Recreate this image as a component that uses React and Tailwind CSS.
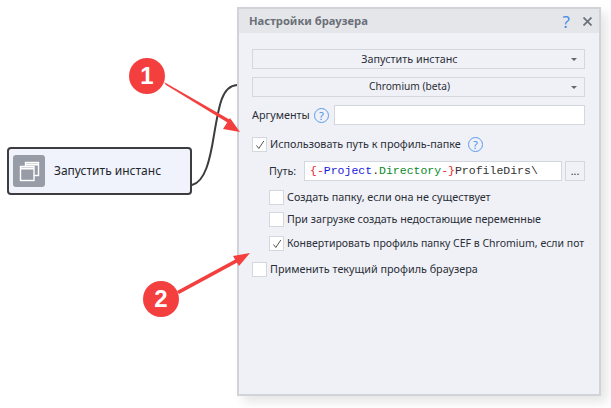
import React from "react";

const font = { fontFamily: '"Noto Sans", "Open Sans", sans-serif' };

const Select = ({ label, size }) => (
  <div className="relative flex h-[20px] items-center justify-center border border-[#d3d7de] bg-[#f0f1f6] pr-[18px] text-[#2a2e36]">
    <span className={size}>{label}</span>
    <span className="absolute right-[7px] top-[8px] h-0 w-0 border-x-[3px] border-t-[3px] border-x-transparent border-t-[#666]" />
  </div>
);

const Help = () => (
  <span className="flex h-[15px] w-[15px] shrink-0 items-center justify-center rounded-full border border-[#5b9bf0] text-[11px] leading-none text-[#4a8de8]">
    ?
  </span>
);

const Check = ({ checked, label, help, size }) => (
  <div className="flex h-[15px] items-center">
    <span className="flex h-[15px] w-[15px] shrink-0 items-center justify-center border border-[#d3d7de] bg-white">
      {checked && (
        <svg width="10" height="10" viewBox="0 0 10 10" fill="none" stroke="#555" strokeWidth="1">
          <path d="M1.5 5.5 L3.8 8.5 L8.8 1" />
        </svg>
      )}
    </span>
    <span className={`ml-[3px] whitespace-nowrap text-[#2a2e36] ${size || ""}`}>{label}</span>
    {help && (
      <span className="ml-[7px]">
        <Help />
      </span>
    )}
  </div>
);

const Arrow = ({ d, pts }) => (
  <>
    <path d={d} fill="#f43f3f" />
    <polygon points={pts} fill="#f43f3f" />
  </>
);

export default function App() {
  return (
    <div className="relative h-[408px] w-[611px] overflow-hidden bg-white text-[10.8px]" style={font}>
      {/* node on the canvas */}
      <div className="absolute left-[7px] top-[147px] flex h-[48px] w-[185px] items-center rounded-[4px] border-2 border-[#3d3d40] bg-[#f0f3fb] pl-[4px]">
        <div className="flex h-[32px] w-[32px] items-center justify-center rounded-[3px] bg-[#979ca6]">
          <svg width="22" height="22" viewBox="0 0 22 22" fill="none" stroke="#fff" strokeWidth="1.4">
            <rect x="7.5" y="2.5" width="13" height="13" />
            <path d="M7.5 4.5 H20.5" strokeWidth="2" />
            <rect x="2.5" y="6.5" width="13.5" height="14" fill="#979ca6" />
            <path d="M2.5 8.5 H16" strokeWidth="2" />
          </svg>
        </div>
        <span className="ml-[9px] text-[12px] text-[#23262c]">Запустить инстанс</span>
      </div>

      {/* connector */}
      <svg className="absolute left-0 top-0" width="611" height="408" fill="none">
        <path d="M192 185 C 205 182, 210 160, 214 135 C 219 105, 222 86, 237 85" stroke="#3d3d40" strokeWidth="2" />
      </svg>

      {/* settings window */}
      <div className="absolute left-[237px] top-[7px] flex h-[389px] w-[364px] flex-col border-2 border-[#d0d3d8] bg-[#f0f1f6] shadow-[6px_6px_10px_rgba(0,0,0,0.10)]">
        <div className="flex h-[24px] shrink-0 items-center justify-between bg-[#e5e6e9] pl-[10px] pr-[7px]">
          <span className="text-[11.2px] font-bold text-[#6a6f78]">Настройки браузера</span>
          <div className="flex items-center gap-[13px]">
            <span className="text-[17px] leading-none text-[#4a8de8]">?</span>
            <svg width="9" height="9" viewBox="0 0 9 9" stroke="#6a6f78" strokeWidth="1.7">
              <path d="M0.5 0.5 L8.5 8.5 M8.5 0.5 L0.5 8.5" />
            </svg>
          </div>
        </div>

        <div className="flex flex-col pl-[13px] pr-[14px] pt-[16px]">
          <div className="flex flex-col gap-[8px]">
            <Select label="Запустить инстанс" />
            <Select label="Chromium (beta)" size="text-[10.2px]" />
            <div className="flex items-center">
              <span className="w-[62px] text-[#2a2e36]">Аргументы</span>
              <Help />
              <div className="ml-[5px] h-[20px] flex-1 border border-[#d3d7de] bg-white" />
            </div>
          </div>

          <div className="mt-[12px]">
            <Check checked label="Использовать путь к профиль-папке" help />
          </div>

          <div className="mt-[9px] flex items-center pl-[17px]">
            <span className="w-[35px] text-[#2a2e36]">Путь:</span>
            <div
              className="flex h-[20px] flex-1 items-center border border-[#d3d7de] bg-white pl-[5px] text-[11.5px] whitespace-nowrap"
              style={{ fontFamily: '"Liberation Mono", monospace' }}
            >
              <span className="text-[#e81c2c]">{"{-"}</span>
              <span className="text-[#1a1ae0]">Project</span>
              <span className="text-[#333]">.</span>
              <span className="text-[#0a8a2a]">Directory</span>
              <span className="text-[#e81c2c]">{"-}"}</span>
              <span className="text-[#333]">ProfileDirs\</span>
            </div>
            <div className="ml-[3px] flex h-[20px] w-[20px] items-center justify-center border border-[#d3d7de] bg-[#f0f1f6] text-[#333]">
              ...
            </div>
          </div>

          <div className="mt-[9px] flex flex-col gap-[7px] pl-[17px]">
            <Check label="Создать папку, если она не существует" />
            <Check label="При загрузке создать недостающие переменные" size="text-[10.7px]" />
            <div className="mt-[2px]">
              <Check checked label="Конвертировать профиль папку CEF в Chromium, если пот" size="text-[10.5px]" />
            </div>
          </div>

          <div className="mt-[11px]">
            <Check label="Применить текущий профиль браузера" />
          </div>
        </div>
      </div>

      {/* annotations */}
      <svg className="absolute left-0 top-0" width="611" height="408" fill="none">
        <Arrow d="M164 82 L166 85 L230 124 L232 121 Z" pts="240,132 223,129 230,118" />
        <Arrow d="M177 291 L179 294 L240 261 L238 258 Z" pts="250,253 233,256 239,266" />
      </svg>
      <div
        className="absolute left-[129px] top-[58px] flex h-[36px] w-[36px] items-center justify-center rounded-full bg-[#f43f3f] text-[24px] font-bold text-white"
        style={{ fontFamily: '"Liberation Sans", sans-serif' }}
      >
        1
      </div>
      <div
        className="absolute left-[143px] top-[281px] flex h-[36px] w-[36px] items-center justify-center rounded-full bg-[#f43f3f] text-[24px] font-bold text-white"
        style={{ fontFamily: '"Liberation Sans", sans-serif' }}
      >
        2
      </div>
    </div>
  );
}
